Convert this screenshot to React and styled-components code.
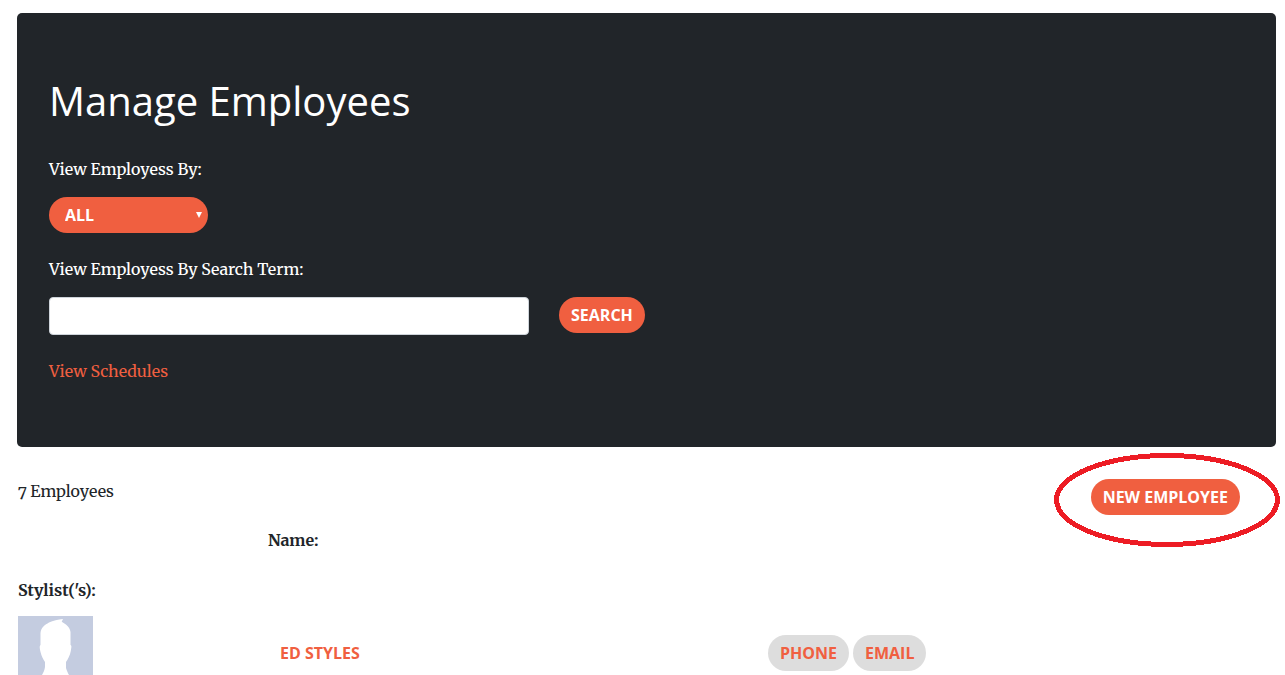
import React, { useState } from "react";
import styled, { createGlobalStyle, css } from "styled-components";

const sans = `"Open Sans", "Noto Sans", sans-serif`;
const serif = `"Merriweather", "DejaVu Serif Condensed", "DejaVu Serif", serif`;
const orange = "#f05f40";
const dark = "#212529";

const GlobalStyle = createGlobalStyle`
  *, *::before, *::after { box-sizing: border-box; }
  body {
    margin: 0;
    background: #fff;
    color: ${dark};
    font: 400 16px/24px ${serif};
    font-variant-numeric: oldstyle-nums;
  }
`;

const Page = styled.main`
  padding: 13px 9px 0 17px;
`;

const Jumbotron = styled.section`
  display: flex;
  flex-direction: column;
  align-items: flex-start;
  padding: 64px 32px;
  border-radius: 5px;
  background: ${dark};
  color: #fff;
`;

const Title = styled.h1`
  margin: 0 0 32px;
  font: 400 40px/48px ${sans};
`;

const Field = styled.div`
  display: flex;
  flex-direction: column;
  gap: 16px;
  margin-bottom: 24px;
`;

const SearchForm = styled.form`
  display: flex;
  flex-wrap: wrap;
  align-items: flex-start;
  gap: 30px;
`;

const Label = styled.label`
  font-weight: 500;
`;

const SelectWrap = styled.div`
  position: relative;
  width: 159px;
`;

const pill = css`
  height: 36px;
  border: 0;
  border-radius: 18px;
  font: 700 16px/24px ${sans};
  text-transform: uppercase;
`;

const Select = styled.select`
  ${pill}
  display: block;
  width: 100%;
  padding: 6px 16px;
  appearance: none;
  background: ${orange};
  color: #fff;
`;

const Arrow = styled.svg`
  position: absolute;
  top: 15px;
  right: 6px;
  pointer-events: none;
`;

const TextInput = styled.input`
  width: 480px;
  max-width: 100%;
  height: 38px;
  padding: 6px 12px;
  border: 1px solid #ced4da;
  border-radius: 4px;
  background: #fff;
  font: 400 16px/24px ${serif};
`;

const tones = {
  primary: css`background: ${orange}; color: #fff;`,
  muted: css`background: #ddd; color: ${orange};`,
  plain: css`background: transparent; color: ${orange};`,
};

const Button = styled.button`
  ${pill}
  padding: 6px 12px;
  cursor: pointer;
  ${({ $tone = "primary" }) => tones[$tone]}
`;

const Link = styled.a`
  color: ${orange};
  text-decoration: none;
`;

const Content = styled.section`
  padding: 32px 8px 0 1px;
`;

const Summary = styled.div`
  display: flex;
  justify-content: space-between;
  align-items: flex-start;
  padding-right: 28px;
  margin-bottom: 13px;
`;

const Highlighted = styled.div`
  position: relative;
`;

const Ring = styled.svg`
  position: absolute;
  top: -26px;
  left: -37px;
  pointer-events: none;
`;

const Table = styled.table`
  width: 100%;
  table-layout: fixed;
  border-collapse: collapse;
`;

const Col = styled.col`
  width: ${({ $share }) => $share};
`;

const Heading = styled.th`
  height: ${({ $height }) => $height};
  padding: 0;
  vertical-align: top;
  text-align: left;
  font-weight: 700;
`;

const PhotoCell = styled.td`
  padding: 0;
`;

const Cell = styled.td`
  padding: 0 0 1px;
  vertical-align: middle;
`;

const Actions = styled.div`
  display: flex;
  gap: 4px;
`;

const Avatar = styled.svg`
  display: block;
`;

const employees = [{ name: "Ed Styles" }];

export default function App() {
  const [group, setGroup] = useState("all");
  const [term, setTerm] = useState("");

  return (
    <>
      <GlobalStyle />
      <Page>
        <Jumbotron>
          <Title>Manage Employees</Title>
          <Field>
            <Label htmlFor="group">View Employess By:</Label>
            <SelectWrap>
              <Select id="group" value={group} onChange={(e) => setGroup(e.target.value)}>
                <option value="all">All</option>
              </Select>
              <Arrow width="6" height="6" viewBox="0 0 6 6" aria-hidden="true">
                <path d="M0 0h6L3 6z" fill="#fff" />
              </Arrow>
            </SelectWrap>
          </Field>
          <Field>
            <Label htmlFor="term">View Employess By Search Term:</Label>
            <SearchForm onSubmit={(e) => e.preventDefault()}>
              <TextInput id="term" value={term} onChange={(e) => setTerm(e.target.value)} />
              <Button type="submit">Search</Button>
            </SearchForm>
          </Field>
          <Link href="#schedules">View Schedules</Link>
        </Jumbotron>

        <Content>
          <Summary>
            <span>7 Employees</span>
            <Highlighted>
              <Button type="button">New Employee</Button>
              <Ring width="226" height="94" viewBox="0 0 226 94" aria-hidden="true">
                <ellipse
                  cx="113" cy="47" rx="110.5" ry="44.5"
                  fill="none" stroke="#ed1c24" strokeWidth="5" shapeRendering="crispEdges"
                />
              </Ring>
            </Highlighted>
          </Summary>

          <Table>
            <colgroup>
              <Col $share="20%" />
              <Col $share="40%" />
              <Col $share="40%" />
            </colgroup>
            <thead>
              <tr>
                <Cell />
                <Heading scope="col" $height="50px">Name:</Heading>
                <Cell />
              </tr>
            </thead>
            <tbody>
              <tr>
                <Heading scope="rowgroup" colSpan={3} $height="38px">Stylist('s):</Heading>
              </tr>
              {employees.map(({ name }) => (
                <tr key={name}>
                  <PhotoCell>
                    <Avatar width="75" height="75" viewBox="0 0 75 75" role="img" aria-label={name}>
                      <rect width="75" height="75" fill="#c4cce0" />
                      <path
                        d="M45 3 43.700 5.700C48 8 52 11 52.500 16V29C54 29.500 53.300 32 52.800 35C52 39.500 50 43 48 46V52C49 55 50 57.500 51 59C55 64 62 65 66 69L70 75H5L9 69C13 65 20 64 24 59C25.500 56.500 26.500 54 27 51V46C25 43 23.500 40 22.800 37C22 33.500 21 30 22.500 29V17C23 11 27 9 31 6.500C35 4.500 40 3.500 45 3Z"
                        fill="#fff"
                      />
                    </Avatar>
                  </PhotoCell>
                  <Cell>
                    <Button type="button" $tone="plain">{name}</Button>
                  </Cell>
                  <Cell>
                    <Actions>
                      <Button type="button" $tone="muted">Phone</Button>
                      <Button type="button" $tone="muted">Email</Button>
                    </Actions>
                  </Cell>
                </tr>
              ))}
            </tbody>
          </Table>
        </Content>
      </Page>
    </>
  );
}
